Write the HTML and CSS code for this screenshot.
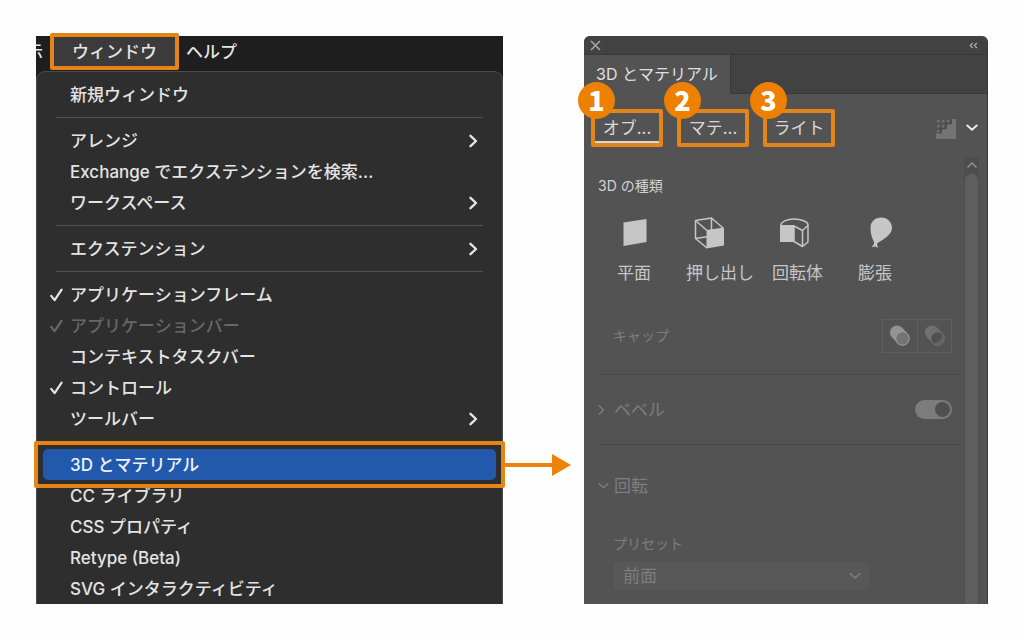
FILE: index.html
```
<!DOCTYPE html>
<html lang="ja">
<head>
<meta charset="utf-8">
<meta name="viewport" content="width=device-width, initial-scale=1">
<title>3D とマテリアル</title>
<link rel="stylesheet" href="styles.css">
</head>
<body>
<svg class="defs" aria-hidden="true">
  <symbol id="check" viewBox="0 0 13 14"><path d="M1.2 7.8 4.6 12.2 11.6 1.6" fill="none" stroke="currentColor" stroke-width="2.2" stroke-linecap="round" stroke-linejoin="round"/></symbol>
  <symbol id="chevron" viewBox="0 0 9 14"><path d="M1.5 1.8 7 7 1.5 12.2" fill="none" stroke="currentColor" stroke-width="2.4" stroke-linecap="round" stroke-linejoin="round"/></symbol>
  <symbol id="down" viewBox="0 0 12 8"><path d="M1.2 1.5 6 6 10.8 1.5" fill="none" stroke="currentColor" stroke-width="1.6" stroke-linecap="round" stroke-linejoin="round"/></symbol>
</svg>
<main class="page">
  <section class="app-menu">
    <nav class="menubar">
      <button class="menubar-item clipped" type="button"><span>示</span></button>
      <button class="menubar-item open" type="button">ウィンドウ</button>
      <button class="menubar-item" type="button">ヘルプ</button>
    </nav>
    <ul class="menu">
      <li><button class="item" type="button"><span class="label">新規ウィンドウ</span></button></li>
      <li class="separator"></li>
      <li><button class="item" type="button"><span class="label">アレンジ</span><svg class="more"><use href="#chevron"/></svg></button></li>
      <li><button class="item" type="button"><span class="label">Exchange でエクステンションを検索...</span></button></li>
      <li><button class="item" type="button"><span class="label">ワークスペース</span><svg class="more"><use href="#chevron"/></svg></button></li>
      <li class="separator"></li>
      <li><button class="item" type="button"><span class="label">エクステンション</span><svg class="more"><use href="#chevron"/></svg></button></li>
      <li class="separator"></li>
      <li><button class="item" type="button"><svg class="tick"><use href="#check"/></svg><span class="label">アプリケーションフレーム</span></button></li>
      <li><button class="item" type="button" disabled><svg class="tick"><use href="#check"/></svg><span class="label">アプリケーションバー</span></button></li>
      <li><button class="item" type="button"><span class="label">コンテキストタスクバー</span></button></li>
      <li><button class="item" type="button"><svg class="tick"><use href="#check"/></svg><span class="label">コントロール</span></button></li>
      <li><button class="item" type="button"><span class="label">ツールバー</span><svg class="more"><use href="#chevron"/></svg></button></li>
      <li class="separator"></li>
      <li class="marked">
        <button class="item selected" type="button"><span class="label">3D とマテリアル</span></button>
        <span class="frame"></span>
        <svg class="arrow" viewBox="0 0 67 24" aria-hidden="true"><path d="M0 12H50" stroke="currentColor" stroke-width="4"/><path d="M48 1 67 12 48 23Z" fill="currentColor"/></svg>
      </li>
      <li><button class="item" type="button"><span class="label">CC ライブラリ</span></button></li>
      <li><button class="item" type="button"><span class="label">CSS プロパティ</span></button></li>
      <li><button class="item" type="button"><span class="label">Retype (Beta)</span></button></li>
      <li><button class="item" type="button"><span class="label">SVG インタラクティビティ</span></button></li>
    </ul>
  </section>

  <section class="panel">
    <header class="titlebar">
      <button class="icon-button" type="button" aria-label="閉じる"><svg width="11" height="11" viewBox="0 0 11 11"><path d="M1 1 10 10M10 1 1 10" stroke="currentColor" stroke-width="1.5"/></svg></button>
      <button class="icon-button" type="button" aria-label="折りたたむ"><svg width="9" height="7" viewBox="0 0 9 7"><path d="M3.7 1 1.2 3.5 3.7 6M7.9 1 5.4 3.5 7.9 6" fill="none" stroke="currentColor" stroke-width="1.3"/></svg></button>
    </header>
    <div class="panel-tabs"><h1 class="panel-tab">3D とマテリアル</h1></div>
    <div class="toolbar">
      <div class="modes">
        <button class="mode current" type="button">オブ...<span class="badge">1</span></button>
        <button class="mode" type="button">マテ...<span class="badge">2</span></button>
        <button class="mode" type="button">ライト<span class="badge">3</span></button>
      </div>
      <button class="icon-button render" type="button" aria-label="レンダリング">
        <svg width="20" height="21" viewBox="0 0 20 21"><path d="M0 21V15.500H5V10.500H10V5.500H15V1H20V21Z" fill="#747474"/><g fill="#707070"><path d="M1 2h2.500v2.500H1zM6 2h2.500v2.500H6zM11 2h2.500v2.500H11zM1 7h2.500v2.500H1zM6 7h2.500v2.500H6zM1 12h2.500v2.500H1z"/></g><path d="M5 15.500V10.500H10V5.500H15V1" fill="none" stroke="#484848" stroke-width="1.500"/></svg>
      </button>
      <button class="icon-button" type="button" aria-label="オプション"><svg class="down" viewBox="0 0 12 8"><path d="M1.300 1.500 6 5.800 10.700 1.500" fill="none" stroke="currentColor" stroke-width="2" stroke-linecap="round" stroke-linejoin="round"/></svg></button>
    </div>
    <div class="scroll-area">
      <div class="content">
        <h2 class="caption">3D の種類</h2>
        <div class="types">
          <button class="type" type="button">
            <svg viewBox="0 0 68 34" width="68" height="34"><path d="M23.5 6.5 46.5 3V26L23.5 30Z" fill="currentColor"/></svg>平面
          </button>
          <button class="type" type="button">
            <svg viewBox="0 0 68 34" width="68" height="34"><g fill="none" stroke="currentColor" stroke-width="1.5" stroke-linejoin="round"><path d="M9.5 4.5 25.5 2V20L9.5 22.5ZM9.5 4.5 21 14.5M25.5 2 37 12M9.5 22.5 21 32M25.5 20 37 29"/></g><path d="M20.5 14 38 11.500V29.500L20.500 32.500Z" fill="currentColor"/></svg>押し出し
          </button>
          <button class="type" type="button">
            <svg viewBox="0 0 51 34" width="51" height="34"><path d="M8 9H22V26H8Z" fill="currentColor"/><g fill="none" stroke="currentColor" stroke-width="1.500" stroke-linejoin="round"><path d="M8.700 10C8.700 5.500 15 3 22 3S36 5.500 36 9V26L30.500 30.500 22 25.500V10L30.500 14.500 36 9.500M30.500 14.500V30.500"/></g></svg>回転体
          </button>
          <button class="type" type="button">
            <svg viewBox="0 0 68 34" width="68" height="34"><path d="M40 1.500C46.500 1.500 51 6 51 12C51 18.500 43 23 36.500 27L36 28.500 37 32 34.500 30.500 30.500 31 33 28 33 26C30.500 21 29.500 17 29.500 11.500C29.500 5.500 34.500 1.500 40 1.500Z" fill="currentColor"/></svg>膨張
          </button>
        </div>
        <div class="row cap">
          <span class="small">キャップ</span>
          <div class="segmented">
            <button class="segment" type="button" aria-label="キャップオン"><svg width="22" height="22" viewBox="0 0 22 22"><path d="M13 2.500A7 7 0 0 0 3 12.500L9 18.500 19 9Z" fill="#939393"/><circle cx="13.500" cy="13.500" r="6.800" fill="#747474" stroke="#a0a0a0"/></svg></button>
            <button class="segment" type="button" aria-label="キャップオフ"><svg width="22" height="22" viewBox="0 0 22 22"><path d="M13 2.500A7 7 0 0 0 3 12.500L9 18.500 19 9Z" fill="#707070"/><circle cx="13.500" cy="13.500" r="6.800" fill="#505050"/><path d="M18.500 9A6.800 6.800 0 0 1 9 18.500C14 18.500 18.500 14 18.500 9Z" fill="#666"/><circle cx="13.500" cy="13.500" r="6.800" fill="none" stroke="#747474"/></svg></button>
          </div>
        </div>
        <div class="row bevel">
          <button class="disclosure" type="button"><svg class="side" viewBox="0 0 7 12"><path d="M1 1.500 5.500 6 1 10.500" fill="none" stroke="currentColor" stroke-width="1.400"/></svg>ベベル</button>
          <input class="switch" type="checkbox" checked aria-label="ベベル">
        </div>
        <div class="rotation">
          <button class="disclosure" type="button"><svg class="side open-side"><use href="#down"/></svg>回転</button>
          <label class="small preset" for="preset">プリセット</label>
          <div class="select-box">
            <select id="preset"><option>前面</option></select>
            <svg class="down"><use href="#down"/></svg>
          </div>
        </div>
      </div>
      <div class="scrollbar"><svg class="up" viewBox="0 0 12 8"><path d="M1.500 6.500 6 2 10.500 6.500" fill="none" stroke="currentColor" stroke-width="1.500"/></svg><div class="thumb"></div></div>
    </div>
  </section>
</main>
</body>
</html>
```
FILE: styles.css
```
* { box-sizing: border-box; }

body {
  margin: 0;
  background: #fdfdfd;
  color: #e4e4e4;
  font: 17px/24px Inter, "Noto Sans CJK JP", sans-serif;
}

button, select {
  margin: 0;
  padding: 0;
  border: 0;
  background: none;
  color: inherit;
  font: inherit;
}

svg { display: block; flex: none; }
.defs { position: absolute; width: 0; height: 0; }

.page {
  display: grid;
  grid-template-columns: 467fr 404fr;
  column-gap: 81px;
  align-items: stretch;
  padding: 36px;
}

/* Application menu */
.app-menu {
  display: flex;
  flex-direction: column;
  background: #1e1e1e;
  font-weight: 500;
}

.menubar { display: flex; height: 35px; align-items: flex-start; }
.menubar-item { height: 31px; padding: 0 7px; white-space: nowrap; }
.menubar-item.clipped {
  display: flex;
  justify-content: flex-end;
  align-items: center;
  width: 13px;
  overflow: hidden;
}
.menubar-item.open {
  position: relative;
  height: 37px;
  margin-top: -3px;
  padding: 0 18px;
  border: 4px solid #e58518;
  border-radius: 2px;
  background: #3b3b3b;
  z-index: 1;
}

.menu {
  flex: 1;
  margin: 0;
  padding: 7px 6px 0;
  border: 1px solid #4b4b4b;
  border-bottom: 0;
  border-radius: 9px 9px 0 0;
  background: #2e2e2e;
  list-style: none;
}

.item {
  display: flex;
  align-items: center;
  width: 100%;
  height: 31px;
  padding: 0 18px 0 27px;
  border-radius: 5px;
  text-align: left;
  white-space: nowrap;
}
.item:disabled { color: #676767; }
.item.selected { background: #2259ac; color: #eef3fb; }
.label { flex: 1; }
.tick { width: 13px; height: 14px; margin: 0 7px 0 -20px; }
.more { width: 9px; height: 14px; }

.separator {
  height: 15px;
  padding: 7px 13px;
}
.separator::before { content: ""; display: block; height: 1px; background: #505050; }

.marked { position: relative; }
.frame {
  position: absolute;
  inset: -8px -9px;
  border: 4px solid #e58518;
  border-radius: 2px;
  pointer-events: none;
}
.arrow {
  position: absolute;
  top: 4px;
  left: calc(100% + 8px);
  width: 67px;
  height: 24px;
  color: #ee8209;
}

/* 3D panel */
.panel {
  display: flex;
  flex-direction: column;
  border-right: 1px solid #3a3a3a;
  border-radius: 6px 6px 0 0;
  background: #535353;
  color: #d2d2d2;
}

.titlebar {
  display: flex;
  align-items: center;
  justify-content: space-between;
  height: 19px;
  padding: 0 9px 0 6px;
  border-bottom: 1px solid #383838;
  border-radius: 6px 6px 0 0;
  background: #424242;
  color: #aaa;
}
.panel-tabs { display: flex; height: 39px; background: #424242; box-shadow: inset 0 -1px #393939; }
.panel-tab {
  margin: 0;
  padding: 0 12px;
  border-right: 1px solid #393939;
  background: #535353;
  color: #e0e0e0;
  font-size: 16px;
  font-weight: 400;
  line-height: 38px;
}

.toolbar {
  display: flex;
  align-items: center;
  gap: 10px;
  height: 63px;
  padding: 5px 9px 0 7px;
}
.modes { display: flex; flex: 1; gap: 14px; }
.mode {
  position: relative;
  width: 72px;
  height: 38px;
  border: 4px solid #e58518;
  border-radius: 2px;
  color: #d8d8d8;
  white-space: nowrap;
}
.mode.current { box-shadow: inset 0 -2px #d8d8d8; }
.badge {
  position: absolute;
  top: -31px;
  left: -17px;
  width: 37px;
  height: 37px;
  border-radius: 50%;
  background: #ee8000;
  color: #fff;
  font: 900 27px/36px "Noto Sans CJK JP", sans-serif;
  text-align: center;
}
.down { width: 12px; height: 8px; }
.icon-button .down { color: #e8e8e8; }

.scroll-area { display: grid; grid-template-columns: 1fr 15px; flex: 1; padding-right: 8px; }
.content { padding: 19px 0 14px 14px; }

.scrollbar { display: flex; flex-direction: column; background: #4d4d4d; color: #8f8f8f; }
.up { width: 12px; height: 8px; margin: 4px auto 5px; }
.thumb { flex: 1; margin: 0 1px; border-radius: 6px 6px 0 0; background: #5e5e5e; }

.caption { margin: 0; font-size: 14px; font-weight: 400; line-height: 20px; }
.types {
  display: grid;
  grid-template-columns: 68px 68px 51px 68px;
  column-gap: 18px;
  margin-top: 20px;
  padding-left: 2px;
  color: #c6c6c6;
}
.type { display: flex; flex-direction: column; align-items: center; gap: 11px; white-space: nowrap; }

.row { display: flex; align-items: center; justify-content: space-between; border-bottom: 1px solid #4a4a4a; color: #7e7e7e; }
.small { font-size: 14px; line-height: 20px; }
.cap { margin-top: 34px; padding: 0 12px 21px 15px; }
.segmented { display: flex; border: 1px solid #5e5e5e; }
.segment { display: grid; place-items: center; width: 34px; height: 32px; }
.segment + .segment { border-left: 1px solid #5e5e5e; }

.bevel { height: 70px; padding-right: 12px; }
.disclosure { display: flex; align-items: center; color: #7e7e7e; }
.side { width: 7px; height: 12px; margin: 0 9px 0 0; }
.open-side { width: 11px; height: 8px; margin: 0 5px 0 0; }
.switch {
  appearance: none;
  width: 37px;
  height: 19px;
  margin: 0;
  padding: 2px;
  border-radius: 10px;
  background: #7c7c7c;
}
.switch::before {
  content: "";
  display: block;
  width: 15px;
  height: 15px;
  margin-left: auto;
  border-radius: 50%;
  background: #4f4f4f;
}

.rotation { display: flex; flex-direction: column; align-items: flex-start; padding-top: 29px; color: #7e7e7e; }
.preset { margin: 36px 0 8px 15px; }
.select-box { position: relative; width: 70%; margin-left: 15px; }
.select-box select {
  appearance: none;
  display: block;
  width: 100%;
  height: 28px;
  padding: 0 10px;
  border-radius: 3px;
  background: #585858;
}
.select-box .down { position: absolute; top: 10px; right: 8px; pointer-events: none; }
```
